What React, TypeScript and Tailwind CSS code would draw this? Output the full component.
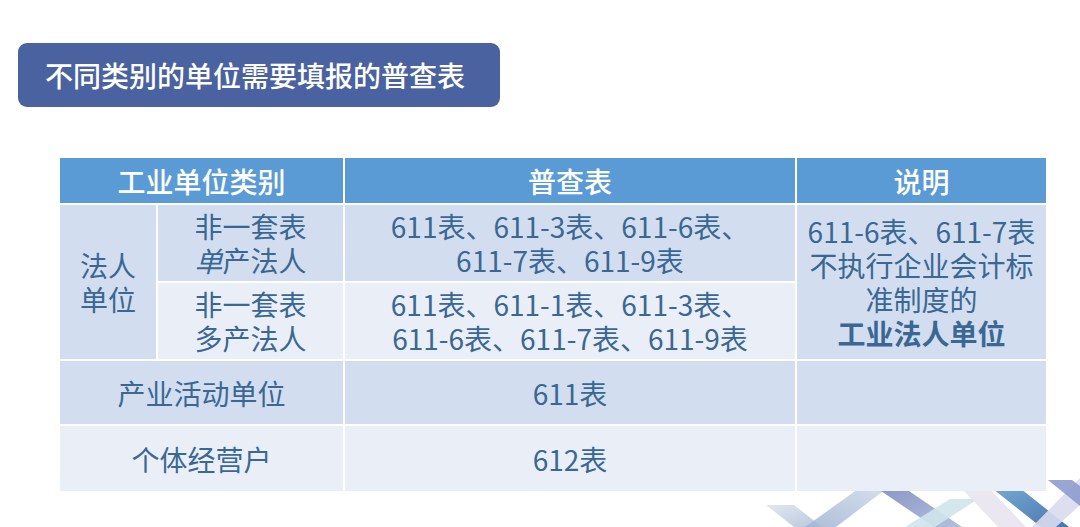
import React from "react";

const dark = "bg-[#d2deef]";
const light = "bg-[#eaeff7]";

function Cell({
  className = "",
  children,
}: {
  className?: string;
  children?: React.ReactNode;
}) {
  return (
    <div
      className={`flex flex-col items-center justify-center text-center text-[28px] leading-[34px] text-[#3a6794] ${className}`}
    >
      {children}
    </div>
  );
}

function Decoration() {
  return (
    <svg
      className="absolute left-[760px] top-[467px]"
      width="320"
      height="60"
      viewBox="760 467 320 60"
    >
      <defs>
        <linearGradient id="g1" x1="0" y1="0" x2="1" y2="1">
          <stop offset="0" stopColor="#dbe3ee" />
          <stop offset="1" stopColor="#aebfd6" />
        </linearGradient>
        <linearGradient id="g2" x1="0" y1="1" x2="1" y2="0">
          <stop offset="0" stopColor="#9fb3d3" />
          <stop offset="1" stopColor="#cdd7e8" />
        </linearGradient>
        <linearGradient id="g3" x1="0" y1="0" x2="1" y2="1">
          <stop offset="0" stopColor="#7d8cc0" />
          <stop offset="1" stopColor="#a9b9d8" />
        </linearGradient>
        <linearGradient id="g4" x1="0" y1="0" x2="1" y2="1">
          <stop offset="0" stopColor="#6ea3cf" />
          <stop offset="1" stopColor="#3f6eaa" />
        </linearGradient>
      </defs>
      <polygon points="766,505 794,505 822,527 794,527" fill="url(#g1)" opacity="0.85" />
      <polygon points="805,527 836,527 886,489 858,489" fill="url(#g2)" opacity="0.85" />
      <polygon points="878,489 906,489 962,527 934,527" fill="url(#g3)" opacity="0.9" />
      <polygon points="905,527 935,527 978,499 950,499" fill="#cfe4ea" opacity="0.9" />
      <polygon points="962,489 990,489 1026,527 998,527" fill="#e9e4ee" opacity="0.9" />
      <polygon points="993,489 1021,489 1069,527 1041,527" fill="url(#g4)" opacity="0.95" />
      <polygon points="1032,527 1056,527 1090,496 1080,478" fill="#d9dcee" opacity="0.9" />
      <polygon points="1048,480 1072,480 1095,497 1080,506" fill="#8e9cce" opacity="0.9" />
    </svg>
  );
}

export default function App() {
  return (
    <div className="relative w-[1080px] h-[527px] overflow-hidden bg-white font-['Noto_Sans_CJK_SC',sans-serif]">
      <Decoration />
      <div className="relative flex flex-col">
        <div className="ml-[18px] mt-[43px] flex h-[64px] w-[482px] items-center rounded-[9px] bg-[#4a62a0] pl-[27px] text-[28px] font-medium text-white">
          不同类别的单位需要填报的普查表
        </div>
        <div className="ml-[60px] mt-[51px] grid w-[986px] grid-cols-[96px_185px_450px_249px] grid-rows-[45px_76px_76px_63px_65px] gap-[2px] bg-white">
          <Cell className="col-span-2 bg-[#5b9bd5] font-medium !text-white">工业单位类别</Cell>
          <Cell className="bg-[#5b9bd5] font-medium !text-white">普查表</Cell>
          <Cell className="bg-[#5b9bd5] font-medium !text-white">说明</Cell>

          <Cell className={`row-span-2 ${dark}`}>
            <span>法人</span>
            <span>单位</span>
          </Cell>
          <Cell className={dark}>
            <span>非一套表</span>
            <span>
              <i>单</i>产法人
            </span>
          </Cell>
          <Cell className={dark}>
            <span>611表、611-3表、611-6表、</span>
            <span>611-7表、611-9表</span>
          </Cell>
          <Cell className={`row-span-2 ${dark}`}>
            <span>611-6表、611-7表</span>
            <span>不执行企业会计标</span>
            <span>准制度的</span>
            <span className="font-bold">工业法人单位</span>
          </Cell>

          <Cell className={light}>
            <span>非一套表</span>
            <span>多产法人</span>
          </Cell>
          <Cell className={light}>
            <span>611表、611-1表、611-3表、</span>
            <span>611-6表、611-7表、611-9表</span>
          </Cell>

          <Cell className={`col-span-2 ${dark}`}>产业活动单位</Cell>
          <Cell className={dark}>611表</Cell>
          <Cell className={dark} />

          <Cell className={`col-span-2 ${light}`}>个体经营户</Cell>
          <Cell className={light}>612表</Cell>
          <Cell className={light} />
        </div>
      </div>
    </div>
  );
}
